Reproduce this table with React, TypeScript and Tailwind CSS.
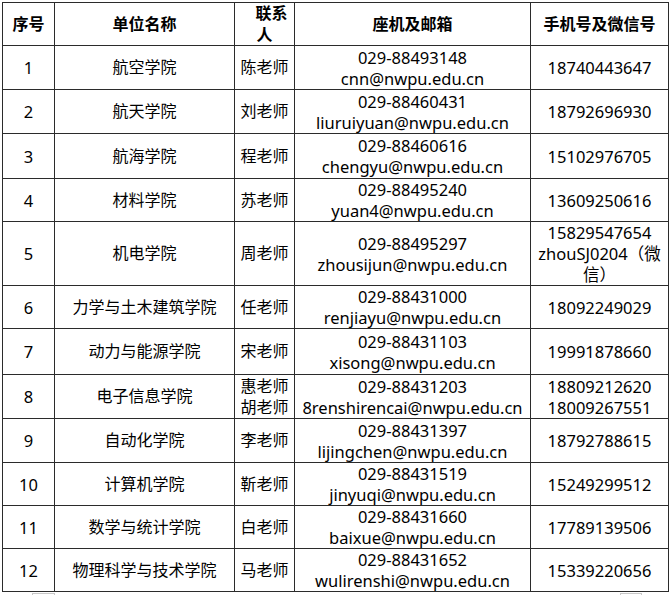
import React from "react";

type Row = {
  no: string;
  unit: string;
  contact: string[];
  tel: string;
  mail: string;
  phone: string[];
  h: string;
  phoneAlign?: string;
};

const rows: Row[] = [
  { no: "1", unit: "航空学院", contact: ["陈老师"], tel: "029-88493148", mail: "cnn@nwpu.edu.cn", phone: ["18740443647"], h: "h-[44px]" },
  { no: "2", unit: "航天学院", contact: ["刘老师"], tel: "029-88460431", mail: "liuruiyuan@nwpu.edu.cn", phone: ["18792696930"], h: "h-[44px]" },
  { no: "3", unit: "航海学院", contact: ["程老师"], tel: "029-88460616", mail: "chengyu@nwpu.edu.cn", phone: ["15102976705"], h: "h-[45px]" },
  { no: "4", unit: "材料学院", contact: ["苏老师"], tel: "029-88495240", mail: "yuan4@nwpu.edu.cn", phone: ["13609250616"], h: "h-[43px]" },
  { no: "5", unit: "机电学院", contact: ["周老师"], tel: "029-88495297", mail: "zhousijun@nwpu.edu.cn", phone: ["15829547654", "zhouSJ0204（微", "信）"], h: "h-[64px]" },
  { no: "6", unit: "力学与土木建筑学院", contact: ["任老师"], tel: "029-88431000", mail: "renjiayu@nwpu.edu.cn", phone: ["18092249029"], h: "h-[43px]" },
  { no: "7", unit: "动力与能源学院", contact: ["宋老师"], tel: "029-88431103", mail: "xisong@nwpu.edu.cn", phone: ["19991878660"], h: "h-[46px]" },
  { no: "8", unit: "电子信息学院", contact: ["惠老师", "胡老师"], tel: "029-88431203", mail: "8renshirencai@nwpu.edu.cn", phone: ["18809212620", "18009267551"], h: "h-[44px]" },
  { no: "9", unit: "自动化学院", contact: ["李老师"], tel: "029-88431397", mail: "lijingchen@nwpu.edu.cn", phone: ["18792788615"], h: "h-[44px]" },
  { no: "10", unit: "计算机学院", contact: ["靳老师"], tel: "029-88431519", mail: "jinyuqi@nwpu.edu.cn", phone: ["15249299512"], h: "h-[43px]", phoneAlign: "align-bottom" },
  { no: "11", unit: "数学与统计学院", contact: ["白老师"], tel: "029-88431660", mail: "baixue@nwpu.edu.cn", phone: ["17789139506"], h: "h-[43px]" },
  { no: "12", unit: "物理科学与技术学院", contact: ["马老师"], tel: "029-88431652", mail: "wulirenshi@nwpu.edu.cn", phone: ["15339220656"], h: "h-[42px]" },
];

const cell = "border border-[#2b2b2b] text-center align-middle px-[1px] leading-[21px] whitespace-nowrap";

export default function App() {
  return (
    <div className="bg-white w-[671px] h-[595px] overflow-hidden pt-[2px] pl-[2px] text-black font-['Noto_Sans','Noto_Sans_CJK_SC',sans-serif]">
      <table className="table-fixed border-collapse w-[666px]">
        <colgroup>
          <col className="w-[52px]" />
          <col className="w-[180px]" />
          <col className="w-[60px]" />
          <col className="w-[236px]" />
          <col className="w-[138px]" />
        </colgroup>
        <thead>
          <tr className="h-[43px] text-[16px] font-bold">
            <th className={cell}>序号</th>
            <th className={cell}>单位名称</th>
            <th className={cell}>
              <div className="pl-[14px]">联系</div>
              <div>人</div>
            </th>
            <th className={cell}>座机及邮箱</th>
            <th className={cell}>手机号及微信号</th>
          </tr>
        </thead>
        <tbody>
          {rows.map((r) => (
            <tr key={r.no} className={r.h}>
              <td className={`${cell} text-[16.5px]`}>{r.no}</td>
              <td className={`${cell} text-[16px]`}>{r.unit}</td>
              <td className={`${cell} text-[16px]`}>
                {r.contact.map((c) => (
                  <div key={c}>{c}</div>
                ))}
              </td>
              <td className={`${cell} text-[16.5px]`}>
                <div>{r.tel}</div>
                <div>{r.mail}</div>
              </td>
              <td className={`${cell} text-[16.5px] ${r.phoneAlign ?? ""}`}>
                {r.phone.map((p) => (
                  <div key={p}>{p}</div>
                ))}
              </td>
            </tr>
          ))}
        </tbody>
      </table>
      {/* selection handles peeking under the sheet */}
      <div className="flex justify-between pl-[30px] pr-[29px] mt-[1px]">
        <div className="w-[23px] h-[4px] border-t border-x border-[#c8c8c8]" />
        <div className="w-[22px] h-[4px] border-t border-x border-[#c8c8c8]" />
      </div>
    </div>
  );
}
